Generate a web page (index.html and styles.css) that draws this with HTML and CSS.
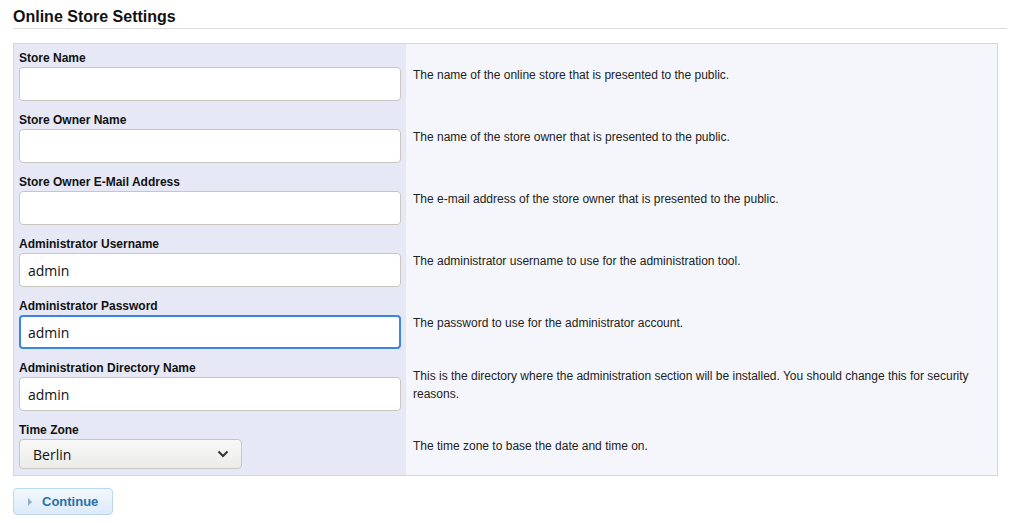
FILE: index.html
```html
<!DOCTYPE html>
<html>
<head>
<meta charset="utf-8">
<link rel="stylesheet" href="styles.css">
</head>
<body>
<h1 class="title">Online Store Settings</h1>
<div class="settings">
  <div class="field">
    <label class="label">Store Name</label>
    <input class="input" type="text" value="">
  </div>
  <div class="desc">The name of the online store that is presented to the public.</div>

  <div class="field">
    <label class="label">Store Owner Name</label>
    <input class="input" type="text" value="">
  </div>
  <div class="desc">The name of the store owner that is presented to the public.</div>

  <div class="field">
    <label class="label">Store Owner E-Mail Address</label>
    <input class="input" type="text" value="">
  </div>
  <div class="desc">The e-mail address of the store owner that is presented to the public.</div>

  <div class="field">
    <label class="label">Administrator Username</label>
    <input class="input" type="text" value="admin">
  </div>
  <div class="desc">The administrator username to use for the administration tool.</div>

  <div class="field">
    <label class="label">Administrator Password</label>
    <input class="input focused" type="text" value="admin">
  </div>
  <div class="desc">The password to use for the administrator account.</div>

  <div class="field">
    <label class="label">Administration Directory Name</label>
    <input class="input" type="text" value="admin">
  </div>
  <div class="desc">This is the directory where the administration section will be installed. You should change this for security reasons.</div>

  <div class="field">
    <label class="label">Time Zone</label>
    <div class="select">
      <span>Berlin</span>
      <svg class="chev" width="12" height="8" viewBox="0 0 12 8"><path d="M1.5 1.5 L6 6 L10.5 1.5" fill="none" stroke="#333" stroke-width="2"/></svg>
    </div>
  </div>
  <div class="desc">The time zone to base the date and time on.</div>
</div>
<button class="btn"><span class="tri"></span>Continue</button>
</body>
</html>
```
FILE: styles.css
```css
html, body { margin: 0; padding: 0; background: #fff; }
body {
  padding: 0 3px 0 13px;
  font-family: "Liberation Sans", Arial, sans-serif;
  color: #111;
}
.title {
  margin: 0;
  padding: 8px 0 2px 0;
  font-size: 16px;
  line-height: 18px;
  font-weight: bold;
  border-bottom: 1px solid #dcdcdc;
}
.settings {
  margin-top: 14px;
  width: 983px;
  display: grid;
  grid-template-columns: 392px 1fr;
  border: 1px solid #d2d6e0;
  background: #f5f6fb;
}
.field {
  background: #e6e9f5;
  padding: 7px 5px 5px 5px;
  display: flex;
  flex-direction: column;
}
.label {
  font-size: 12px;
  font-weight: bold;
  line-height: 14px;
  height: 16px;
  color: #111;
}
.input {
  box-sizing: border-box;
  width: 382px;
  height: 34px;
  margin: 0;
  border: 1px solid #c9c6c2;
  border-radius: 4px;
  background: #fff;
  padding: 0 8px;
  font-family: "Open Sans", sans-serif;
  font-size: 14px;
  color: #111;
  outline: none;
}
.input.focused {
  border: 2px solid #3b86e0;
  padding: 0 7px;
}
.desc {
  display: flex;
  align-items: center;
  padding: 0 20px 0 7px;
  font-size: 12px;
  line-height: 18px;
  color: #222;
}
.select {
  box-sizing: border-box;
  width: 223px;
  height: 30px;
  margin-bottom: 1px;
  border: 1px solid #c8c6c3;
  border-radius: 4px;
  background: linear-gradient(#f8f8f7, #ebebea);
  display: flex;
  align-items: center;
  justify-content: space-between;
  padding: 0 12px 0 13px;
  font-family: "Open Sans", sans-serif;
  font-size: 14px;
  color: #111;
}
.chev { display: block; }
.btn {
  margin-top: 12px;
  box-sizing: border-box;
  width: 100px;
  height: 27px;
  border: 1px solid #bcd6ee;
  border-radius: 4px;
  background: linear-gradient(#f2f8fd, #dbebfa);
  display: flex;
  align-items: center;
  padding: 0 0 0 14px;
  font-family: "Liberation Sans", Arial, sans-serif;
  font-size: 13px;
  font-weight: bold;
  color: #2e6ea6;
  cursor: pointer;
}
.tri {
  width: 0;
  height: 0;
  border-top: 4px solid transparent;
  border-bottom: 4px solid transparent;
  border-left: 4px solid #8fb0cc;
  margin-right: 10px;
}
```
